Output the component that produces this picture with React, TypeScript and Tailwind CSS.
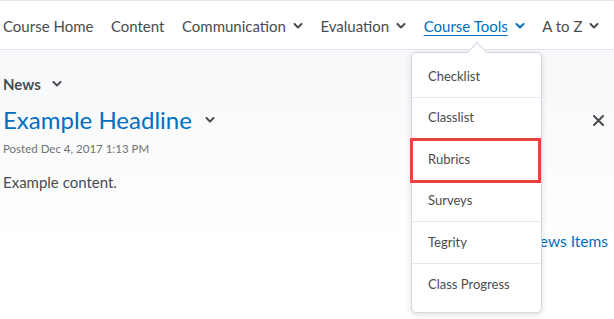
import React from 'react';

const Chevron: React.FC<{ className?: string }> = ({ className }) => (
  <svg width="10" height="6" viewBox="0 0 10 6" className={className} fill="none">
    <path d="M1.5 1l3.5 3.5L8.5 1" stroke="currentColor" strokeWidth="2" strokeLinecap="round" strokeLinejoin="round" />
  </svg>
);

const navItems = [
  { label: 'Course Home', chevron: false },
  { label: 'Content', chevron: false },
  { label: 'Communication', chevron: true },
  { label: 'Evaluation', chevron: true },
  { label: 'Course Tools', chevron: true, active: true },
  { label: 'A to Z', chevron: true },
];

const menu = ['Checklist', 'Classlist', 'Rubrics', 'Surveys', 'Tegrity', 'Class Progress'];

const App: React.FC = () => {
  return (
    <div
      className="relative w-[614px] h-[319px] overflow-hidden bg-white text-[#494c4e]"
      style={{ fontFamily: 'Lato, "Open Sans", sans-serif' }}
    >
      {/* Nav bar */}
      <nav className="h-[50px] border-t border-t-[#e6e8eb] border-b border-b-[#e3e6ea] bg-white flex items-center pl-[3px] pt-[2px] gap-[17.5px]">
        {navItems.map((item) => (
          <div key={item.label} className="flex items-center gap-[7px] shrink-0">
            <span
              className={
                item.active
                  ? 'text-[15px] text-[#006fbf] underline underline-offset-[3px] whitespace-nowrap'
                  : 'text-[15px] text-[#494c4e] whitespace-nowrap'
              }
            >
              {item.label}
            </span>
            {item.chevron && (
              <Chevron className={item.active ? 'text-[#006fbf]' : 'text-[#494c4e]'} />
            )}
          </div>
        ))}
      </nav>

      {/* Content */}
      <div className="bg-gradient-to-b from-[#f7f8fa] to-white px-[3px] pt-[23px]">
        <div className="flex items-center gap-[11px] h-[22px]">
          <span className="text-[15px] font-bold text-[#494c4e]">News</span>
          <Chevron className="text-[#494c4e]" />
        </div>
        <div className="flex items-center mt-[9px] h-[32px]">
          <span className="text-[24px] text-[#006fbf] leading-none">Example Headline</span>
          <Chevron className="ml-[13px] text-[#494c4e]" />
          <span className="ml-auto mr-[7px] text-[#494c4e]">
            <svg width="11" height="11" viewBox="0 0 11 11">
              <path d="M1 1l9 9M10 1l-9 9" stroke="currentColor" strokeWidth="2" strokeLinecap="round" />
            </svg>
          </span>
        </div>
        <div className="text-[11.5px] text-[#6e7376] mt-[5px] leading-[16px]">Posted Dec 4, 2017 1:13 PM</div>
        <div className="text-[15px] text-[#494c4e] mt-[15px] leading-[20px]">Example content.</div>
        <div className="flex justify-end mt-[38px] pr-[3px]">
          <span className="text-[15.5px] text-[#006fbf]">View News Items</span>
        </div>
      </div>

      {/* Course Tools dropdown */}
      <div className="absolute left-[411px] top-[52px] w-[131px] h-[261px] bg-white border border-[#d3d9e3] rounded-[5px] shadow-[0_2px_6px_rgba(0,0,0,0.12)] pt-[3px]">
        <div className="absolute left-[58px] -top-[8px] w-[14px] h-[14px] rotate-45 bg-white border-l border-t border-[#d3d9e3]" />
        <ul className="relative">
          {menu.map((m, i) => (
            <li
              key={m}
              className={`h-[41.6px] flex items-center pl-[16px] text-[13px] text-[#494c4e] ${
                i < menu.length - 1 ? 'border-b border-[#e6e8eb]' : ''
              }`}
            >
              {m}
            </li>
          ))}
        </ul>
      </div>

      {/* Highlight box */}
      <div className="absolute left-[410px] top-[138px] w-[131px] h-[45px] border-[3px] border-[#e8453c]" />
    </div>
  );
};

export default App;
